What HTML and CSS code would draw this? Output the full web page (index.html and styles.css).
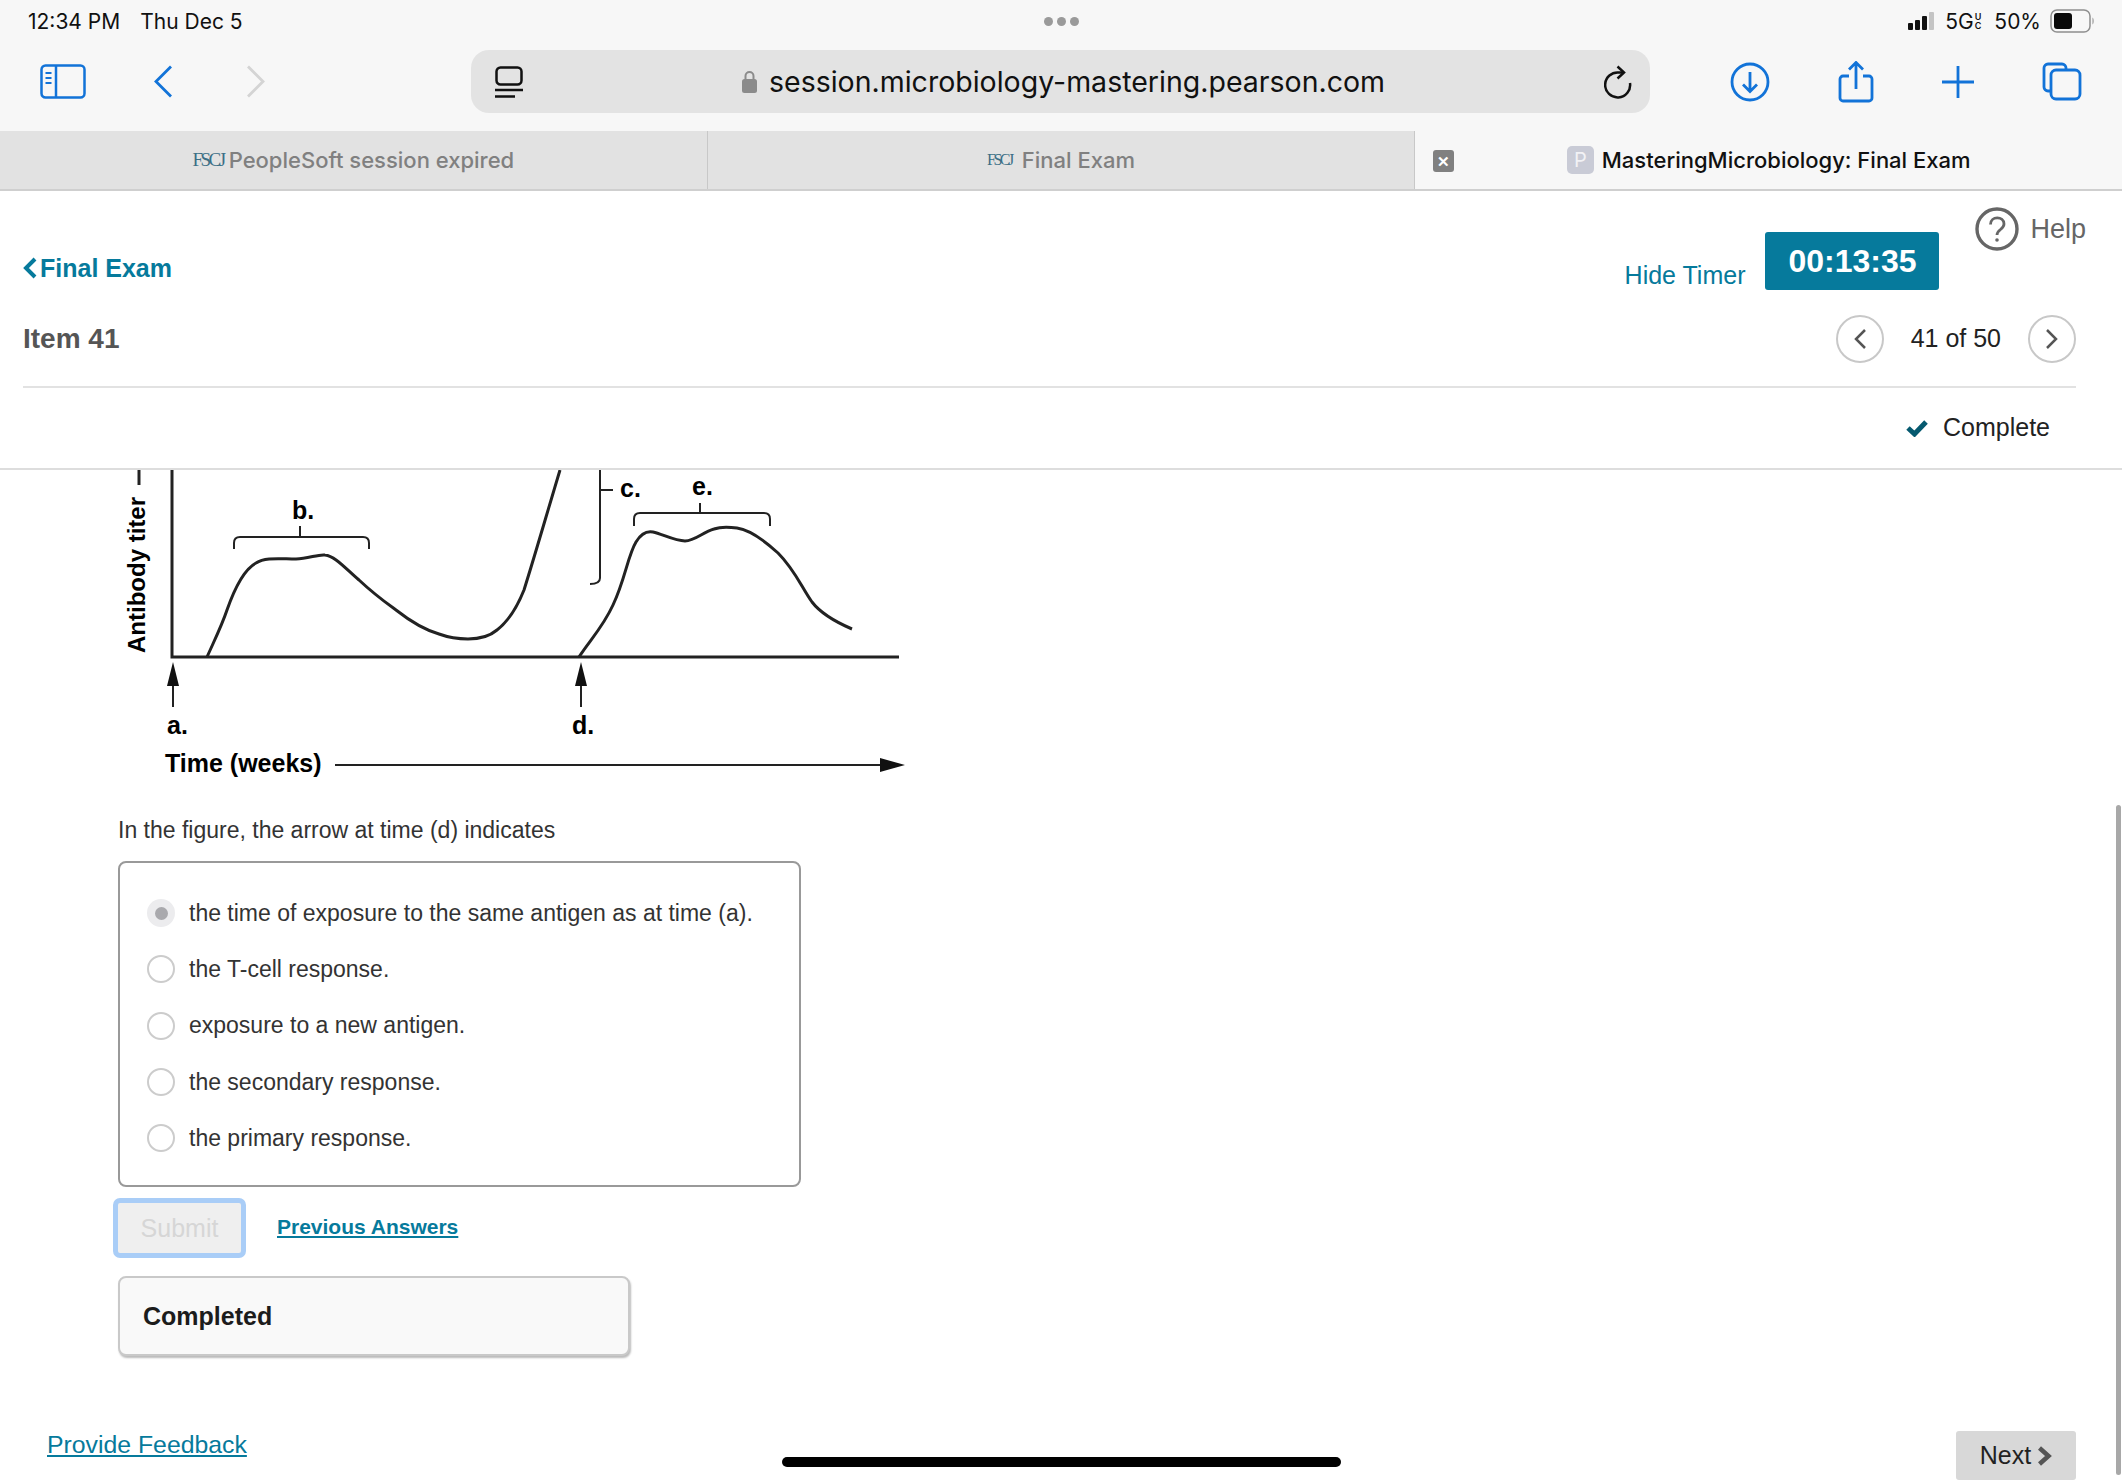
FILE: index.html
```html
<!DOCTYPE html>
<html lang="en">
    <head>
        <title>MasteringMicrobiology: Final Exam</title>
        <meta charset="utf-8">
        <link rel="stylesheet" href="styles.css">
    </head>
    <body>

        <div class="statusbar">
            <div class="status-left">
                <span class="clock">12:34 PM</span>
                <span>Thu Dec 5</span>
            </div>
            <div class="dots"><i></i><i></i><i></i></div>
            <div class="status-right">
                <svg class="signal" width="28" height="18" viewBox="0 0 28 18">
                    <rect x="0" y="11" width="5" height="7" rx="1" fill="#111"/>
                    <rect x="7" y="8" width="5" height="10" rx="1" fill="#111"/>
                    <rect x="14" y="4" width="5" height="14" rx="1" fill="#111"/>
                    <rect x="21" y="0" width="5" height="18" rx="1" fill="#c4c4c4"/>
                </svg>
                <span class="network">5G<small>U<br>C</small></span>
                <span>50%</span>
                <svg class="battery" width="45" height="24" viewBox="0 0 45 24">
                    <rect x="1" y="1" width="39" height="22" rx="6" fill="none" stroke="#8f8f8f" stroke-width="1.5"/>
                    <rect x="4" y="4" width="18" height="16" rx="3" fill="#0a0a0a"/>
                    <path d="M42.5 8.5c1.5 .8 1.5 6.2 0 7z" fill="#8f8f8f"/>
                </svg>
            </div>
        </div>

        <div class="toolbar">
            <svg class="tool-sidebar" width="46" height="35" viewBox="0 0 46 35" fill="none" stroke="#1273d8" stroke-width="2.5">
                <rect x="1.5" y="1.5" width="43" height="32" rx="4"/>
                <path d="M16 1.5v32"/>
                <path d="M5.5 9h6M5.5 14h6M5.5 19h6" stroke-width="2"/>
            </svg>
            <svg class="tool-back" width="20" height="33" viewBox="0 0 20 33" fill="none" stroke="#1273d8" stroke-width="2.8">
                <path d="M18 1.5L3 16.500L18 31.500"/>
            </svg>
            <svg class="tool-forward" width="20" height="33" viewBox="0 0 20 33" fill="none" stroke="#d4d4d4" stroke-width="2.8">
                <path d="M2 1.500L17 16.500L2 31.500"/>
            </svg>
            <div class="urlbar">
                <svg class="reader" width="28" height="32" viewBox="0 0 28 32" fill="none" stroke="#111" stroke-width="2.500">
                    <rect x="1.500" y="1.500" width="25" height="17" rx="4"/>
                    <path d="M0 24h28M0 30.500h20"/>
                </svg>
                <div class="address">
                    <svg width="15" height="23" viewBox="0 0 15 23">
                        <path d="M3.500 10V6a4 4 0 0 1 8 0v4" fill="none" stroke="#8b8b8b" stroke-width="2"/>
                        <rect x="0" y="9" width="15" height="14" rx="2.500" fill="#8b8b8b"/>
                    </svg>
                    <span>session.microbiology-mastering.pearson.com</span>
                </div>
                <svg class="reload" width="28" height="34" viewBox="0 0 28 34" fill="none" stroke="#111" stroke-width="2.500">
                    <path d="M26 18A12.500 12.500 0 1 1 15 7.500H20"/>
                    <path d="M13.500 1.500L20 7.500L13.500 13.500"/>
                </svg>
            </div>
            <div class="tool-actions">
                <svg width="40" height="40" viewBox="0 0 40 40" fill="none" stroke="#1273d8" stroke-width="2.800">
                    <circle cx="20" cy="20" r="18"/>
                    <path d="M20 10v19M13 22.500l7 7 7-7"/>
                </svg>
                <svg width="36" height="42" viewBox="0 0 36 42" fill="none" stroke="#1273d8" stroke-width="2.800">
                    <path d="M11 15H5a3 3 0 0 0-3 3v19a3 3 0 0 0 3 3h26a3 3 0 0 0 3-3V18a3 3 0 0 0-3-3h-6"/>
                    <path d="M18 28V2M11 8.500l7-7 7 7"/>
                </svg>
                <svg width="32" height="32" viewBox="0 0 32 32" fill="none" stroke="#1273d8" stroke-width="2.800">
                    <path d="M16 0v32M0 16h32"/>
                </svg>
                <svg width="40" height="39" viewBox="0 0 40 39" fill="none" stroke="#1273d8" stroke-width="2.800">
                    <path d="M9 29H6a4 4 0 0 1-4-4V6a4 4 0 0 1 4-4h14a4 4 0 0 1 4 4v2"/>
                    <rect x="9" y="8" width="29" height="29" rx="5"/>
                </svg>
            </div>
        </div>

        <div class="tabs">
            <div class="tab"><span class="fscj">FSCJ</span>PeopleSoft session expired</div>
            <div class="tab"><span class="fscj fscj-small">FSCJ</span>Final Exam</div>
            <div class="tab tab-active">
                <span class="tab-close">&#10005;</span>
                <span class="tab-icon">P</span>
                <span class="tab-title">MasteringMicrobiology: Final Exam</span>
            </div>
        </div>

        <div class="header">
            <div class="header-top">
                <a class="back-link" href="#">
                    <svg width="14" height="22" viewBox="0 0 14 22" fill="none" stroke="#067a9c" stroke-width="4">
                        <path d="M12 2L3 11l9 9"/>
                    </svg>Final Exam</a>
                <div class="header-tools">
                    <a class="hide-timer" href="#">Hide Timer</a>
                    <div class="timer">00:13:35</div>
                    <a class="help" href="#">
                        <svg width="44" height="44" viewBox="0 0 44 44" fill="none" stroke="#666" stroke-width="3.400">
                            <circle cx="22" cy="22" r="20"/>
                            <path d="M15.500 17.500c0-9 13.500-8.500 13.500-.5 0 5.500-7 5.500-7 11" stroke-width="2.800"/>
                            <circle cx="22" cy="33" r="1.800" fill="#666" stroke="none"/>
                        </svg>
                        <span>Help</span>
                    </a>
                </div>
            </div>
            <div class="item-row">
                <h2>Item 41</h2>
                <div class="pager">
                    <a class="pager-btn" href="#">
                        <svg width="14" height="22" viewBox="0 0 14 22" fill="none" stroke="#555" stroke-width="2.500"><path d="M12 2L3 11l9 9"/></svg>
                    </a>
                    <span>41 of 50</span>
                    <a class="pager-btn" href="#">
                        <svg width="14" height="22" viewBox="0 0 14 22" fill="none" stroke="#555" stroke-width="2.500"><path d="M2 2l9 9-9 9"/></svg>
                    </a>
                </div>
            </div>
            <div class="complete-row">
                <svg width="22" height="18" viewBox="0 0 22 18" fill="none" stroke="#05596f" stroke-width="5">
                    <path d="M2 9l6.500 6L20 3"/>
                </svg>
                <span>Complete</span>
            </div>
        </div>

        <div class="content">
            <svg class="figure" width="800" height="330" viewBox="118 470 800 330">
                <g fill="none" stroke="#222">
                    <path d="M172 470V657H899" stroke-width="3"/>
                    <path stroke-width="3" d="M207 657C216 637 222 625 227 610C234 590 243 570 256 563C265 557 280 559 296 559C308 559 318 554 325 555C335 556 345 568 359 580C375 595 385 602 396 610C410 621 425 630 439 634C450 638 460 639 468 639C480 639 490 636 497 630C510 620 518 605 524 590C535 555 545 520 560 470"/>
                    <path stroke-width="3" d="M579 657C590 640 603 627 613 605C625 580 628 555 636 542C642 532 648 531 653 532C662 534 675 541 685 541C695 541 703 532 714 529C722 526 730 527 737 528C750 530 765 541 778 553C795 570 802 588 812 602C822 615 838 623 852 629"/>
                    <path stroke-width="2" d="M600 470V578Q600 584 590 584M600 490H613"/>
                    <path stroke-width="2" d="M234 549V543Q234 537 240 537H363Q369 537 369 543V549M300 526V537"/>
                    <path stroke-width="2" d="M634 526V519Q634 513 640 513H764Q770 513 770 519V526M700 503V513"/>
                    <path stroke-width="2" d="M173 707V680M581 707V680M335 765H885"/>
                    <path stroke-width="3" d="M139 470V485"/>
                </g>
                <g fill="#111">
                    <path d="M173 662L179 686H167Z"/>
                    <path d="M581 662L587 686H575Z"/>
                    <path d="M905 765L880 758V772Z"/>
                </g>
                <g class="figure-text">
                    <text x="292" y="519">b.</text>
                    <text x="620" y="497">c.</text>
                    <text x="692" y="495">e.</text>
                    <text x="167" y="734">a.</text>
                    <text x="572" y="734">d.</text>
                    <text x="165" y="772">Time (weeks)</text>
                    <text class="axis-title" transform="translate(145 653) rotate(-90)">Antibody titer</text>
                </g>
            </svg>

            <p class="question">In the figure, the arrow at time (d) indicates</p>

            <div class="answers">
                <label class="answer"><span class="radio radio-picked"></span>the time of exposure to the same antigen as at time (a).</label>
                <label class="answer"><span class="radio"></span>the T-cell response.</label>
                <label class="answer"><span class="radio"></span>exposure to a new antigen.</label>
                <label class="answer"><span class="radio"></span>the secondary response.</label>
                <label class="answer"><span class="radio"></span>the primary response.</label>
            </div>

            <div class="submit-row">
                <button class="submit" type="button">Submit</button>
                <a class="previous" href="#">Previous Answers</a>
            </div>

            <div class="completed">Completed</div>
        </div>

        <div class="footer">
            <a class="feedback" href="#">Provide Feedback</a>
            <a class="next" href="#">Next
                <svg width="15" height="20" viewBox="0 0 15 20" fill="none" stroke="#555" stroke-width="4.500"><path d="M2.500 2l9 8-9 8"/></svg>
            </a>
        </div>

        <div class="scrollbar"></div>
        <div class="home-indicator"></div>

    </body>
</html>
```

FILE: styles.css
```css
* {
    box-sizing: border-box;
}
html, body {
    height: 100%;
}
body {
    margin: 0;
    position: relative;
    overflow: hidden;
    background-color: #fff;
    color: #222;
    font-family: "Liberation Sans", Arial, sans-serif;
}
a {
    text-decoration: none;
}
svg {
    display: block;
    flex: none;
}

/* Browser chrome */
.statusbar {
    height: 42px;
    padding: 0 27px 0 28px;
    display: grid;
    grid-template-columns: 1fr auto 1fr;
    align-items: center;
    background-color: #f7f7f7;
    color: #111;
    font-family: Inter, sans-serif;
    font-size: 21px;
}
.status-left {
    display: flex;
    gap: 20px;
}
.dots {
    display: flex;
    gap: 4px;
}
.dots i {
    width: 9px;
    height: 9px;
    border-radius: 50%;
    background-color: #9a9a9a;
}
.status-right {
    display: flex;
    justify-content: flex-end;
    align-items: center;
    gap: 9px;
}
.network {
    display: flex;
    align-items: center;
    margin-right: 4px;
}
.network small {
    margin-left: 1px;
    font-size: 9px;
    font-weight: 600;
    line-height: 9px;
}
.toolbar {
    height: 89px;
    padding: 8px 40px 18px 40px;
    display: flex;
    align-items: center;
    background-color: #f7f7f7;
}
.tool-back {
    margin-left: 67px;
}
.tool-forward {
    margin-left: 73px;
}
.urlbar {
    width: 1182px;
    height: 63px;
    margin-left: 205px;
    padding: 0 18px 0 24px;
    display: flex;
    align-items: center;
    justify-content: space-between;
    border-radius: 18px;
    background-color: #e3e3e3;
    color: #111;
}
.address {
    display: flex;
    align-items: center;
    gap: 12px;
    font-family: Inter, sans-serif;
    font-size: 28.500px;
}
.tool-actions {
    margin-left: 80px;
    display: flex;
    align-items: center;
    gap: 68px;
}
.tabs {
    height: 60px;
    display: flex;
    border-bottom: 2px solid #cfcfcf;
    background-color: #e2e2e2;
    color: #808080;
    font-family: Inter, sans-serif;
    font-size: 22px;
    font-weight: 500;
}
.tab {
    flex: 1;
    display: flex;
    align-items: center;
    justify-content: center;
    border-right: 1px solid #c8c8c8;
}
.fscj {
    margin-right: 5px;
    color: #3b6f86;
    font-family: "Liberation Serif", serif;
    font-size: 19px;
    letter-spacing: -2.500px;
}
.fscj-small {
    margin-right: 10px;
    font-size: 16px;
}
.tab-active {
    position: relative;
    border-right: 0;
    background-color: #f7f7f7;
    color: #111;
}
.tab-close {
    position: absolute;
    left: 18px;
    top: 19px;
    width: 21px;
    height: 22px;
    display: flex;
    align-items: center;
    justify-content: center;
    border-radius: 3px;
    background-color: #808080;
    color: #fff;
    font-size: 15px;
    font-weight: bold;
}
.tab-icon {
    width: 27px;
    height: 28px;
    margin-right: 8px;
    display: flex;
    align-items: center;
    justify-content: center;
    border-radius: 5px;
    background-color: #c9cbd6;
    color: #f2f2f5;
    font-size: 20px;
    font-weight: 400;
}

/* Quiz header */
.header {
    height: 279px;
    padding: 0 46px 0 23px;
    border-bottom: 2px solid #ddd;
}
.header-top {
    height: 110px;
    display: flex;
    justify-content: space-between;
}
.back-link {
    margin-top: 64px;
    display: flex;
    align-items: center;
    gap: 3px;
    height: 26px;
    color: #067a9c;
    font-size: 25px;
    font-weight: bold;
}
.header-tools {
    display: flex;
    align-items: flex-start;
}
.hide-timer {
    margin-top: 70px;
    color: #067a9c;
    font-size: 25px;
}
.timer {
    width: 174px;
    height: 58px;
    margin: 41px 0 0 20px;
    display: flex;
    align-items: center;
    justify-content: center;
    border-radius: 3px;
    background-color: #067a9c;
    color: #fff;
    font-size: 32px;
    font-weight: bold;
}
.help {
    margin: 16px -10px 0 36px;
    display: flex;
    align-items: center;
    gap: 11px;
    color: #666;
    font-size: 27px;
}
.item-row {
    height: 87px;
    display: flex;
    align-items: center;
    justify-content: space-between;
    padding-bottom: 10px;
    border-bottom: 2px solid #e2e2e2;
}
.item-row h2 {
    margin: 0;
    color: #555;
    font-size: 28px;
}
.pager {
    display: flex;
    align-items: center;
    gap: 27px;
    font-size: 25px;
}
.pager-btn {
    width: 48px;
    height: 48px;
    display: flex;
    align-items: center;
    justify-content: center;
    border: 2px solid #c8c8c8;
    border-radius: 50%;
}
.complete-row {
    height: 79px;
    padding-right: 26px;
    display: flex;
    align-items: center;
    justify-content: flex-end;
    gap: 15px;
    font-size: 25px;
}

/* Question */
.content {
    padding-left: 118px;
}
.figure-text {
    font-size: 25px;
    font-weight: bold;
}
.axis-title {
    font-size: 24px;
}
.question {
    margin: 16px 0 17px 0;
    color: #333;
    font-size: 23px;
    line-height: 28px;
}
.answers {
    width: 683px;
    height: 326px;
    padding: 22px 0 0 27px;
    border: 2px solid #999;
    border-radius: 8px;
}
.answer {
    height: 56.300px;
    display: flex;
    align-items: center;
    gap: 14px;
    color: #333;
    font-size: 23px;
}
.radio {
    width: 28px;
    height: 28px;
    display: flex;
    align-items: center;
    justify-content: center;
    border: 2px solid #ccc;
    border-radius: 50%;
}
.radio-picked {
    border: 0;
    background-color: #ececee;
}
.radio-picked:after {
    content: "";
    width: 13px;
    height: 13px;
    border-radius: 50%;
    background-color: #a9a9ad;
}
.submit-row {
    margin: 11px 0 0 -5px;
    display: flex;
    align-items: center;
    gap: 31px;
}
.submit {
    width: 133px;
    height: 60px;
    border: 5px solid #a9cdf7;
    border-radius: 7px;
    background-color: #efefef;
    color: #d6d6d6;
    font-family: "Liberation Sans", Arial, sans-serif;
    font-size: 25px;
}
.previous {
    margin-bottom: 2px;
    color: #067a9c;
    font-size: 21px;
    font-weight: bold;
    text-decoration: underline;
}
.completed {
    width: 512px;
    height: 80px;
    margin-top: 18px;
    padding-left: 23px;
    display: flex;
    align-items: center;
    border: 2px solid #c9c9c9;
    border-radius: 8px;
    background-color: #f9f9f9;
    box-shadow: 1px 2px 2px #bbb;
    color: #1c1c1c;
    font-size: 25px;
    font-weight: bold;
}

/* Footer */
.footer {
    margin-top: 75px;
    padding: 0 46px 0 47px;
    display: flex;
    align-items: flex-start;
    justify-content: space-between;
}
.feedback {
    color: #067a9c;
    font-size: 24.800px;
    text-decoration: underline;
}
.next {
    width: 120px;
    height: 49px;
    display: flex;
    align-items: center;
    justify-content: center;
    gap: 6px;
    border-radius: 3px;
    background-color: #d8d8d8;
    color: #222;
    font-size: 25px;
}

/* Overlays */
.scrollbar {
    position: absolute;
    top: 805px;
    right: 1px;
    width: 5px;
    height: 670px;
    border-radius: 3px;
    background-color: #a8a8a8;
}
.home-indicator {
    position: absolute;
    left: 782px;
    top: 1457px;
    width: 559px;
    height: 10px;
    border-radius: 5px;
    background-color: #000;
}
```
